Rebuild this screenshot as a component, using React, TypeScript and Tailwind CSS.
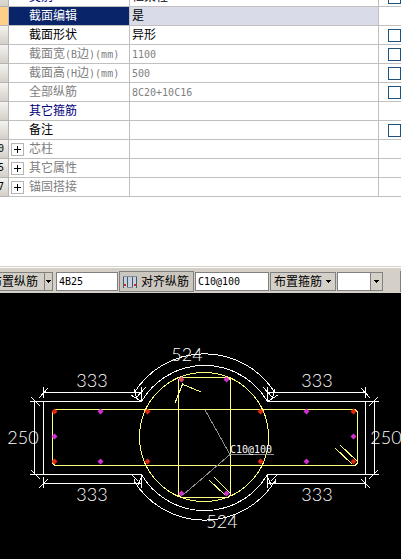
import { Fragment } from 'react'

interface PropertyRow {
  num?: string
  label: string
  value?: string
  tone: 'normal' | 'muted' | 'link' | 'selected'
  check?: boolean
  expandable?: boolean
}

const ROWS: PropertyRow[] = [
  { label: '类别', value: '框架柱', tone: 'link', check: true },
  { label: '截面编辑', value: '是', tone: 'selected' },
  { label: '截面形状', value: '异形', tone: 'normal', check: true },
  { label: '截面宽(B边)(mm)', value: '1100', tone: 'muted', check: true },
  { label: '截面高(H边)(mm)', value: '500', tone: 'muted', check: true },
  { label: '全部纵筋', value: '8C20+10C16', tone: 'muted', check: true },
  { label: '其它箍筋', tone: 'link' },
  { label: '备注', tone: 'normal', check: true },
  { num: '0', label: '芯柱', tone: 'muted', expandable: true },
  { num: '5', label: '其它属性', tone: 'muted', expandable: true },
  { num: '7', label: '锚固搭接', tone: 'muted', expandable: true },
]

const LABEL_TONE = {
  normal: 'text-black',
  muted: 'text-[#808080]',
  link: 'text-[#000080]',
  selected: 'bg-[#0a246a] text-white',
}

const RED_BARS = [[54, 411], [54, 461], [147, 411], [147, 461], [260, 411], [260, 461], [353, 411], [353, 461]]
const MAGENTA_BARS = [
  [54, 436], [100, 411], [100, 461], [181, 379], [226, 379],
  [181, 493], [226, 493], [306, 411], [306, 461], [353, 436],
]

const DIMENSIONS = [
  { x: 92, y: 387, text: '333' },
  { x: 317, y: 387, text: '333' },
  { x: 92, y: 501, text: '333' },
  { x: 317, y: 501, text: '333' },
  { x: 23, y: 444, text: '250' },
  { x: 386, y: 444, text: '250' },
  { x: 187, y: 361, text: '524' },
  { x: 222, y: 528, text: '524' },
]

// Latin runs are set in a half-width mono face next to full-width Chinese
function Mixed({ text }: { text: string }) {
  return (
    <>
      {text.split(/([\x20-\x7e]+)/).map((part, i) => (
        <Fragment key={i}>
          {i % 2 === 1 ? <span className="font-['DejaVu_Sans_Mono',monospace] text-[10px]">{part}</span> : part}
        </Fragment>
      ))}
    </>
  )
}

function PropertyTable() {
  return (
    <div className="overflow-hidden">
      <table className="-mt-3 w-full table-fixed border-separate border-spacing-0">
        <colgroup>
          <col className="w-[9px]" />
          <col className="w-[121px]" />
          <col />
          <col className="w-[22px]" />
        </colgroup>
        <tbody>
          {ROWS.map((row) => (
            <tr key={row.label} className="h-[19px] leading-[18px]">
              <td className={`overflow-hidden border-r border-b border-[#b4b4b4] p-0 ${row.tone === 'selected' ? 'bg-[#fcd08a]' : 'bg-linear-to-b from-[#f4f3f0] to-[#d4d0c8]'}`}>
                <span className="-ml-0.5 block h-[18px] font-['DejaVu_Sans_Mono',monospace] text-[10px]">{row.num}</span>
              </td>
              <th scope="row" className={`border-r border-b border-[#c0c0c0] p-0 text-left font-normal ${LABEL_TONE[row.tone]}`}>
                <div className="flex h-[18px] items-center">
                  <span className="flex w-5 shrink-0 pl-0.5">
                    {row.expandable && (
                      <button aria-label={`展开${row.label}`} className="flex size-[13px] items-center justify-center border border-[#b4b4b4] bg-white text-black">
                        <svg viewBox="0 0 7 7" className="size-[7px]" stroke="currentColor" shapeRendering="crispEdges">
                          <path d="M0 3.5H7M3.5 0V7" />
                        </svg>
                      </button>
                    )}
                  </span>
                  <span className="whitespace-nowrap"><Mixed text={row.label} /></span>
                </div>
              </th>
              <td className={`border-r border-b border-[#c0c0c0] p-0 pl-0.5 ${row.tone === 'selected' ? 'bg-[#d9dce8]' : ''} ${row.tone === 'muted' ? 'text-[#808080]' : 'text-black'}`}>
                <div className="h-[18px]"><Mixed text={row.value ?? ''} /></div>
              </td>
              <td className="overflow-hidden border-b border-[#c0c0c0] p-0 pl-[9px]">
                {row.check && (
                  <input type="checkbox" aria-label={row.label} className="block size-[13px] appearance-none border border-[#1c5180] bg-white" />
                )}
              </td>
            </tr>
          ))}
        </tbody>
      </table>
    </div>
  )
}

function Arrow() {
  return (
    <svg viewBox="0 0 5 3" className="h-[3px] w-[5px] shrink-0" shapeRendering="crispEdges">
      <path d="M0 0H5L2.5 3Z" />
    </svg>
  )
}

function AlignBarsIcon() {
  return (
    <svg viewBox="0 0 14 12" className="h-3 w-3.5 shrink-0" shapeRendering="crispEdges">
      <path d="M1 1H13V11H1Z" fill="#c6d3de" />
      <path d="M0.5 0V12M4.5 0V12M9.5 0V12M13.5 0V12" stroke="#44566c" />
      <path d="M0 0.5H14M4 11.5H10" stroke="#7e8c9c" />
      <path d="M1 8H3V10H1ZM11 8H13V10H11Z" fill="#d03020" />
    </svg>
  )
}

function Toolbar() {
  return (
    <div className="flex h-[26px] items-center overflow-hidden border-t border-white bg-[#d4d0c8] pt-0.5">
      <button className="flex h-[19px] w-[53px] shrink-0 items-center border border-l-0 border-[#808080]">
        <span className="flex w-11 justify-end overflow-hidden whitespace-nowrap pr-1.5">布置纵筋</span>
        <span className="flex h-full w-2 items-center justify-center border-l border-[#808080]"><Arrow /></span>
      </button>
      <input aria-label="纵筋" defaultValue="4B25" className="ml-[3px] h-[19px] w-[62px] shrink-0 border border-[#808080] bg-white px-0.5 font-['DejaVu_Sans_Mono',monospace] text-[10px]" />
      <button className="ml-px flex h-[21px] w-[75px] shrink-0 items-center gap-1 border border-[#808080] bg-[#cbc7bf] pl-[3px] whitespace-nowrap">
        <AlignBarsIcon />
        对齐纵筋
      </button>
      <input aria-label="箍筋" defaultValue="C10@100" className="ml-px h-[19px] w-[74px] shrink-0 border border-[#808080] bg-white px-0.5 font-['DejaVu_Sans_Mono',monospace] text-[10px]" />
      <button className="ml-px flex h-[19px] w-[66px] shrink-0 items-center gap-1 border border-[#808080] pl-[3px] whitespace-nowrap">
        布置箍筋
        <Arrow />
      </button>
      <div className="relative ml-px h-[19px] w-[46px] shrink-0">
        <select aria-label="肢数" className="block size-full appearance-none border border-[#808080] bg-white" />
        <span className="pointer-events-none absolute inset-y-0 right-0 flex w-[13px] items-center justify-center border border-[#808080] bg-[#d4d0c8]"><Arrow /></span>
      </div>
      <div className="ml-auto h-[21px] w-px bg-[#808080]" />
    </div>
  )
}

// Dimension lines and tick marks of one wing; the other one is its mirror image
function WingDimensions() {
  return (
    <>
      <path d="M43 392.5H141.5M43.5 387V398M141.5 387V401.5M39 398L48 388M136 398L146 387" />
      <path d="M34.5 401.5V474.5M30 401.5H43.5M30 474.5H43.5M31 397L40 406M31 470L40 479" />
      <path d="M43 483.5H141.5M43.5 477V488M141.5 474.5V488M39 488L48 479M137 487L141 478" />
      <path d="M141.5 401.5L131 395M134 389L137 399M141.5 474.5L129 475M132 475L138 481M134 479V484" />
    </>
  )
}

function SectionDrawing() {
  return (
    <svg viewBox="0 293 401 266" className="block w-full bg-black" role="img" aria-label="截面配筋图" fill="none">
      <g stroke="#fff" shapeRendering="crispEdges">
        <path d="M141.5 401.5H43.5V474.5H141.5M267.5 401.5H365.5V474.5H267.5" />
        <path d="M141.5 401.5A73 73 0 0 1 267.5 401.5M141.5 474.5A73 73 0 0 0 267.5 474.5" />
        <path d="M134 393A83 83 0 0 1 275 393M134 481A83 83 0 0 0 275 481" />
        <WingDimensions />
        <g transform="translate(409 0) scale(-1 1)">
          <WingDimensions />
        </g>
      </g>

      {/* Stirrups */}
      <g stroke="#ffff80" shapeRendering="crispEdges">
        <circle cx="204" cy="437" r="64.5" />
        <path d="M55 409.5H355L357.5 412V463L355 465.5H55L52.5 463V412Z" />
        <path d="M181 377.5H228L230.5 380V495L228 497.5H181L178.5 495V380Z" />
        <path d="M182 384L201 392M183 383L175 403M209 480L225 495M214 477L230 493M335 448L352 464M340 445L357 461" />
      </g>

      <path d="M205 410L230 454.5L183 495M230 454.5H274" stroke="#909090" shapeRendering="crispEdges" />

      {RED_BARS.map(([x, y]) => (
        <path key={`${x}-${y}`} transform={`translate(${x} ${y})`} d="M0.5 -2.5L3.5 0.5L0.5 3.5L-2.5 0.5Z" fill="#e02810" />
      ))}
      {MAGENTA_BARS.map(([x, y]) => (
        <path key={`${x}-${y}`} transform={`translate(${x} ${y})`} d="M0.5 -2.5L3.5 0.5L0.5 3.5L-2.5 0.5Z" fill="#d030d0" />
      ))}
      <path d="M180 378h3v3h-3z" fill="#e05030" />

      <g className="fill-white font-['Lato','Liberation_Sans',sans-serif] text-[18px] font-light" textAnchor="middle">
        {DIMENSIONS.map((d) => (
          <text key={`${d.x}-${d.y}`} x={d.x} y={d.y}>{d.text}</text>
        ))}
      </g>
      <text x="230" y="453" className="fill-white font-['DejaVu_Sans_Mono',monospace] text-[10px]">C10@100</text>
    </svg>
  )
}

export default function App() {
  return (
    <div className="min-h-screen bg-white font-['Liberation_Sans','Noto_Sans_CJK_SC',sans-serif] text-xs text-black">
      <PropertyTable />
      <div className="h-[70px] border-b border-[#d4d0c8]" />
      <Toolbar />
      <SectionDrawing />
    </div>
  )
}
